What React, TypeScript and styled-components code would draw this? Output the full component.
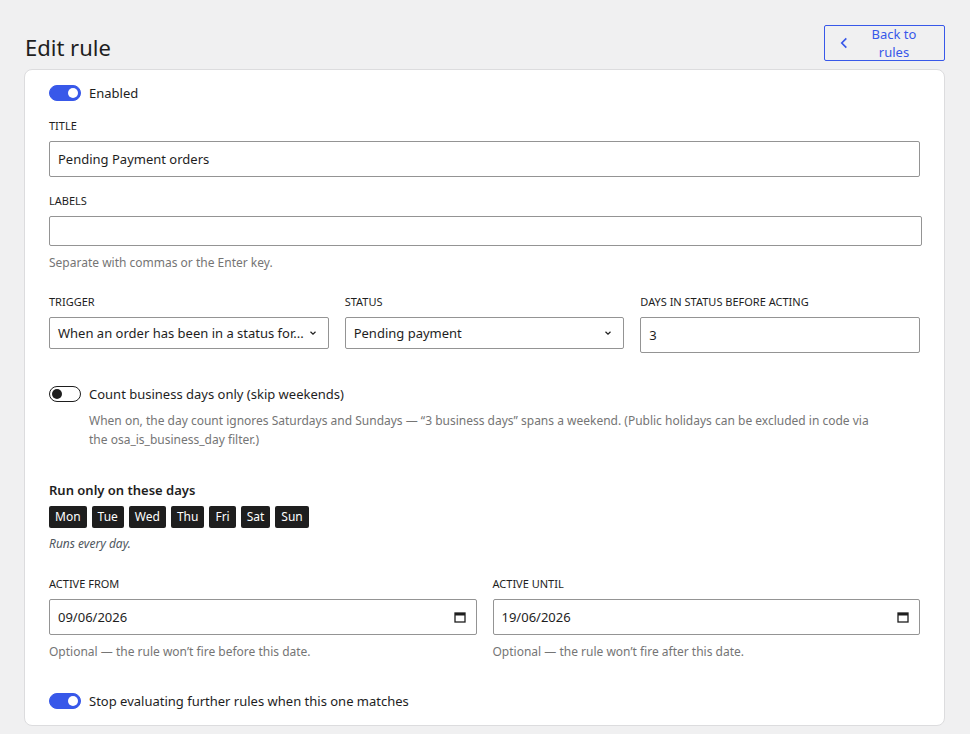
import styled, { createGlobalStyle } from 'styled-components';

const Global = createGlobalStyle`
  body { margin: 0; background: #f0f0f1; font-family: 'Noto Sans', 'Open Sans', sans-serif; color: #1e1e1e; }
`;

const Page = styled.div`
  padding: 25px 25px 24px 24px;
`;

const TopBar = styled.div`
  display: flex;
  justify-content: space-between;
  align-items: flex-end;
  margin-bottom: 7px;
`;

const Heading = styled.h1`
  margin: 0 0 0 1px;
  font-size: 22px;
  font-weight: 400;
  line-height: 30px;
`;

const BackBtn = styled.button`
  display: flex;
  align-items: center;
  gap: 8px;
  height: 36px;
  width: 121px;
  padding: 0 14px;
  border: 1px solid #3858e9;
  border-radius: 2px;
  background: transparent;
  color: #3858e9;
  font: inherit;
  font-size: 13px;
  margin-bottom: 1px;
`;

const Card = styled.div`
  background: #fff;
  border: 1px solid #dcdcde;
  border-radius: 8px;
  padding: 14px 24px 15px 24px;
`;

const ToggleRow = styled.label`
  display: flex;
  align-items: center;
  gap: 8px;
  font-size: 13px;
`;

const Track = styled.span<{ $on: boolean }>`
  position: relative;
  width: 32px;
  height: 16px;
  border-radius: 9px;
  box-sizing: border-box;
  background: ${({ $on }) => ($on ? '#3858e9' : '#fff')};
  border: 1px solid ${({ $on }) => ($on ? '#3858e9' : '#1e1e1e')};
  &::after {
    content: '';
    position: absolute;
    top: 2px;
    left: ${({ $on }) => ($on ? '18px' : '2px')};
    width: 10px;
    height: 10px;
    border-radius: 50%;
    background: ${({ $on }) => ($on ? '#fff' : '#1e1e1e')};
  }
`;

const Field = styled.div<{ $mt?: number }>`
  margin-top: ${({ $mt }) => $mt ?? 0}px;
  display: flex;
  flex-direction: column;
`;

const Label = styled.div`
  font-size: 11px;
  text-transform: uppercase;
  line-height: 14px;
  margin-bottom: 8px;
`;

const Input = styled.div<{ $h?: number }>`
  height: ${({ $h }) => $h ?? 36}px;
  box-sizing: border-box;
  border: 1px solid #949494;
  border-radius: 2px;
  display: flex;
  align-items: center;
  justify-content: space-between;
  padding: 0 10px 0 8px;
  font-size: 13px;
`;

const Help = styled.div`
  font-size: 12px;
  color: #757575;
  margin-top: 9px;
  line-height: 16px;
`;

const Row3 = styled.div`
  display: grid;
  grid-template-columns: 1fr 1fr 1fr;
  gap: 16px;
  margin-top: 24px;
  align-items: start;
`;

const Row2 = styled.div`
  display: grid;
  grid-template-columns: 1fr 1fr;
  gap: 16px;
  margin-top: 25px;
`;

const Desc = styled.div`
  margin: 8px 0 0 40px;
  font-size: 12px;
  line-height: 19px;
  color: #757575;
  max-width: 780px;
`;

const SubHead = styled.div`
  margin-top: 32px;
  font-size: 13px;
  font-weight: 600;
`;

const Days = styled.div`
  display: flex;
  gap: 5px;
  margin-top: 7px;
`;

const Day = styled.span`
  background: #1e1e1e;
  color: #fff;
  font-size: 12px;
  height: 22px;
  line-height: 22px;
  padding: 0 6px;
  border-radius: 2px;
`;

const Note = styled.div`
  margin-top: 7px;
  font-size: 12px;
  font-style: italic;
  color: #50575e;
`;

const Chevron = () => (
  <svg width="10" height="10" viewBox="0 0 10 10"><path d="M2.5 3.8 5 6.2l2.5-2.4" fill="none" stroke="#1e1e1e" strokeWidth="1.2" /></svg>
);

const Cal = () => (
  <svg width="12" height="12" viewBox="0 0 12 12"><rect x="1" y="2" width="10" height="9" fill="none" stroke="#1e1e1e" strokeWidth="1.3" /><rect x="1" y="2" width="10" height="2.5" fill="#1e1e1e" /></svg>
);

export default function App() {
  const days = ['Mon', 'Tue', 'Wed', 'Thu', 'Fri', 'Sat', 'Sun'];
  return (
    <Page>
      <Global />
      <TopBar>
        <Heading>Edit rule</Heading>
        <BackBtn>
          <svg width="12" height="14" viewBox="0 0 12 14"><path d="M8 2 3 7l5 5" fill="none" stroke="#3858e9" strokeWidth="1.8" /></svg>
          Back to rules
        </BackBtn>
      </TopBar>
      <Card>
        <ToggleRow><Track $on />Enabled</ToggleRow>
        <Field $mt={17}>
          <Label>Title</Label>
          <Input>Pending Payment orders</Input>
        </Field>
        <Field $mt={17}>
          <Label>Labels</Label>
          <Input $h={30} style={{ marginRight: -2 }} />
          <Help>Separate with commas or the Enter key.</Help>
        </Field>
        <Row3>
          <Field>
            <Label>Trigger</Label>
            <Input $h={32}>When an order has been in a status for... <Chevron /></Input>
          </Field>
          <Field>
            <Label>Status</Label>
            <Input $h={32}>Pending payment <Chevron /></Input>
          </Field>
          <Field>
            <Label>Days in status before acting</Label>
            <Input>3</Input>
          </Field>
        </Row3>
        <Field $mt={32}>
          <ToggleRow><Track $on={false} />Count business days only (skip weekends)</ToggleRow>
          <Desc>When on, the day count ignores Saturdays and Sundays — “3 business days” spans a weekend. (Public holidays can be excluded in code via the osa_is_business_day filter.)</Desc>
        </Field>
        <SubHead>Run only on these days</SubHead>
        <Days>{days.map((d) => <Day key={d}>{d}</Day>)}</Days>
        <Note>Runs every day.</Note>
        <Row2>
          <Field>
            <Label>Active from</Label>
            <Input>09/06/2026 <Cal /></Input>
            <Help>Optional — the rule won’t fire before this date.</Help>
          </Field>
          <Field>
            <Label>Active until</Label>
            <Input>19/06/2026 <Cal /></Input>
            <Help>Optional — the rule won’t fire after this date.</Help>
          </Field>
        </Row2>
        <Field $mt={32}>
          <ToggleRow><Track $on />Stop evaluating further rules when this one matches</ToggleRow>
        </Field>
      </Card>
    </Page>
  );
}
